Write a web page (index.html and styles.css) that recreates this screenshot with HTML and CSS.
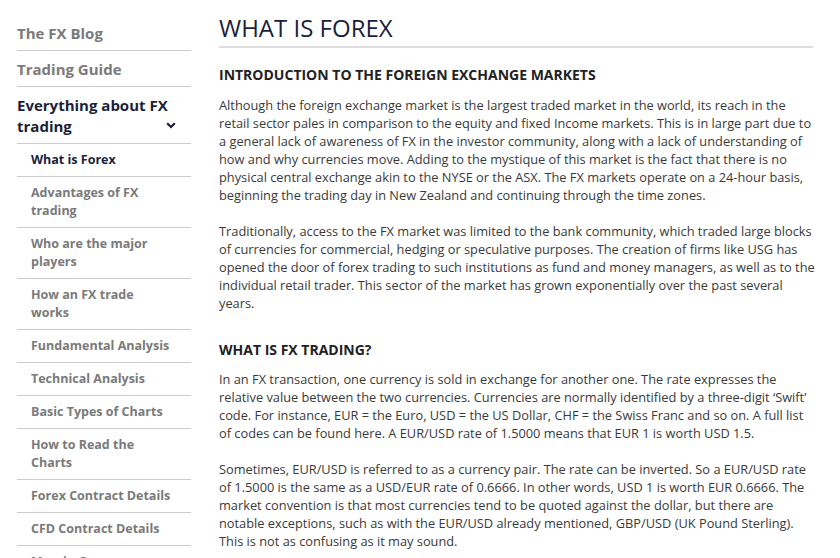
FILE: index.html
```html
<!DOCTYPE html>
<html lang="en">
<head>
  <meta charset="UTF-8">
  <meta name="viewport" content="width=device-width, initial-scale=1.0">
  <title>What is Forex</title>
  <link rel="stylesheet" href="styles.css">
</head>
<body>
  <div class="page">
    <nav class="sidebar">
      <a class="nav-item" href="#">The FX Blog</a>
      <a class="nav-item" href="#">Trading Guide</a>
      <a class="nav-item open" href="#">Everything about FX trading
        <svg class="chevron" width="10" height="7" viewBox="0 0 10 7"><path d="M1.2 1.2 L5 5 L8.8 1.2" fill="none" stroke="#1b1f3b" stroke-width="2.2"/></svg>
      </a>
      <a class="sub-item active" href="#">What is Forex</a>
      <a class="sub-item" href="#">Advantages of FX trading</a>
      <a class="sub-item" href="#">Who are the major players</a>
      <a class="sub-item" href="#">How an FX trade works</a>
      <a class="sub-item" href="#">Fundamental Analysis</a>
      <a class="sub-item" href="#">Technical Analysis</a>
      <a class="sub-item" href="#">Basic Types of Charts</a>
      <a class="sub-item" href="#">How to Read the Charts</a>
      <a class="sub-item" href="#">Forex Contract Details</a>
      <a class="sub-item" href="#">CFD Contract Details</a>
      <a class="sub-item" href="#">Margin Or</a>
    </nav>

    <main class="content">
      <h1>WHAT IS FOREX</h1>

      <h2>INTRODUCTION TO THE FOREIGN EXCHANGE MARKETS</h2>
      <p>Although the foreign exchange market is the largest traded market in the world, its reach in the<br>
        retail sector pales in comparison to the equity and fixed Income markets. This is in large part due to<br>
        a general lack of awareness of FX in the investor community, along with a lack of understanding of<br>
        how and why currencies move. Adding to the mystique of this market is the fact that there is no<br>
        physical central exchange akin to the NYSE or the ASX. The FX markets operate on a 24-hour basis,<br>
        beginning the trading day in New Zealand and continuing through the time zones.</p>
      <p>Traditionally, access to the FX market was limited to the bank community, which traded large blocks<br>
        of currencies for commercial, hedging or speculative purposes. The creation of firms like USG has<br>
        opened the door of forex trading to such institutions as fund and money managers, as well as to the<br>
        individual retail trader. This sector of the market has grown exponentially over the past several<br>
        years.</p>

      <h2>WHAT IS FX TRADING?</h2>
      <p>In an FX transaction, one currency is sold in exchange for another one. The rate expresses the<br>
        relative value between the two currencies. Currencies are normally identified by a three-digit ‘Swift’<br>
        code. For instance, EUR = the Euro, USD = the US Dollar, CHF = the Swiss Franc and so on. A full list<br>
        of codes can be found here. A EUR/USD rate of 1.5000 means that EUR 1 is worth USD 1.5.</p>
      <p>Sometimes, EUR/USD is referred to as a currency pair. The rate can be inverted. So a EUR/USD rate<br>
        of 1.5000 is the same as a USD/EUR rate of 0.6666. In other words, USD 1 is worth EUR 0.6666. The<br>
        market convention is that most currencies tend to be quoted against the dollar, but there are<br>
        notable exceptions, such as with the EUR/USD already mentioned, GBP/USD (UK Pound Sterling).<br>
        This is not as confusing as it may sound.</p>
    </main>
  </div>
</body>
</html>
```

FILE: styles.css
```css
body {
  margin: 0;
  background-color: #fff;
  font-family: "Open Sans", sans-serif;
  color: #3a3a3a;
}
.page {
  display: flex;
  align-items: flex-start;
  gap: 28px;
  padding: 14px 0 0 17px;
  height: 544px;
  overflow: hidden;
}
.sidebar {
  width: 174px;
  flex-shrink: 0;
  margin-top: 1px;
  display: flex;
  flex-direction: column;
}
.nav-item {
  position: relative;
  display: block;
  padding: 8px 20px 6px 0;
  font-size: 15px;
  line-height: 21px;
  font-weight: 700;
  color: #7a7a7a;
  text-decoration: none;
  border-bottom: 1px solid #ccc;
}
.nav-item.open {
  color: #1b1f3b;
}
.chevron {
  position: absolute;
  right: 15px;
  bottom: 14px;
}
.sub-item {
  display: block;
  padding: 7px 19px 7px 14px;
  font-size: 12.5px;
  line-height: 18px;
  font-weight: 700;
  color: #7a7a7a;
  text-decoration: none;
  border-bottom: 1px solid #ccc;
}
.sub-item.active {
  color: #1b1f3b;
}
.content {
  width: 594px;
}
h1 {
  margin: 0;
  padding: 0 0 4px;
  font-size: 24px;
  line-height: 28px;
  font-weight: 400;
  color: #1b1f3b;
  border-bottom: 2px solid #ddd;
}
h2 {
  margin: 17px 0 11px;
  font-size: 14px;
  line-height: 20px;
  font-weight: 700;
  color: #222;
}
p {
  margin: 0 0 18px;
  font-size: 12.8px;
  line-height: 18px;
  white-space: nowrap;
}
p + h2 {
  margin: 28px 0 10px;
}
```
